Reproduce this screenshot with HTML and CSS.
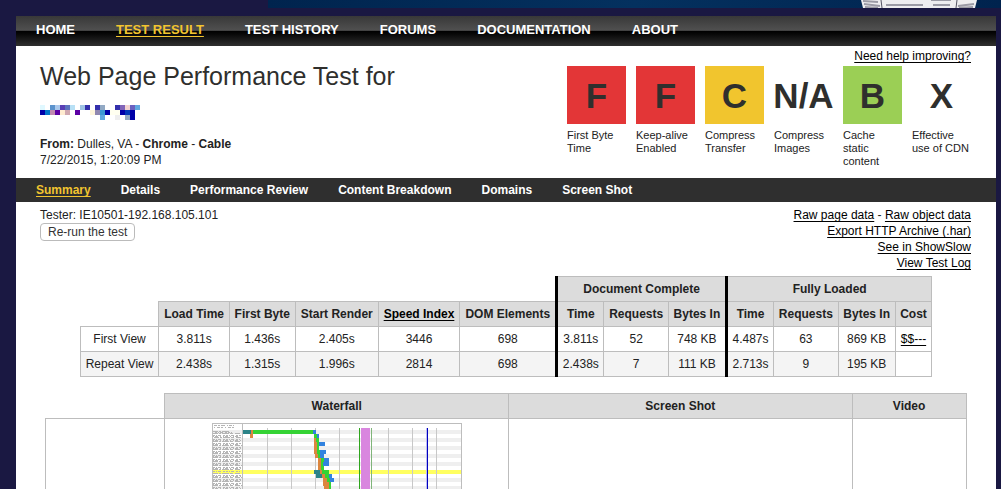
FILE: index.html
```html
<!DOCTYPE html>
<html lang="en">
<head>
<meta charset="utf-8">
<title>Web Page Performance Test</title>
<link rel="stylesheet" href="styles.css">
</head>
<body>
<div class="banner">
  <svg class="banner-art" width="120" height="8" viewBox="0 0 120 8" aria-hidden="true">
    <path d="M3 0 5 8H117L119 0Z" fill="#eeeef0"/>
    <path d="M6 4 22 6M7 7 20 8M5 1 20 2M100 6 116 4M101 8 115 7" stroke="#9b9ba5" stroke-width="2"/>
    <path d="M23 0 24 8M99 0 98 8" stroke="#555564"/>
    <path d="M28 5H65M73 0H93M75 5H92" stroke="#9b9ba5" stroke-width="2"/>
  </svg>
</div>
<div class="page">
  <nav class="main-nav" aria-label="Main">
    <a href="#home">HOME</a>
    <a class="active" href="#result">TEST RESULT</a>
    <a href="#history">TEST HISTORY</a>
    <a href="#forums">FORUMS</a>
    <a href="#docs">DOCUMENTATION</a>
    <a href="#about">ABOUT</a>
  </nav>
  <header class="header">
    <div class="summary">
      <h1>Web Page Performance Test for</h1>
      <svg class="tested-url" width="100" height="15" viewBox="0 0 20 3" shape-rendering="crispEdges" aria-hidden="true">
        <path fill="#e0f8ff" d="M0 0h1v1h-1z"/><path fill="#5b92cc" d="M2 0h1v1h-1z"/><path fill="#aac8ec" d="M3 0h1v1h-1z"/><path fill="#5a3fb5" d="M4 0h1v1h-1z"/><path fill="#5b72bf" d="M5 0h1v1h-1z"/><path fill="#b8e0f5" d="M6 0h1v1h-1z"/><path fill="#9fc4e4" d="M8 0h1v1h-1z"/><path fill="#3430ac" d="M9 0h1v1h-1zM11 0h1v1h-1zM15 0h1v1h-1z"/><path fill="#92a9c4" d="M12 0h1v1h-1zM17 2h1v1h-1z"/><path fill="#8064b8" d="M16 0h1v1h-1z"/><path fill="#f2d2d0" d="M17 0h1v1h-1z"/><path fill="#6a60c0" d="M18 0h1v1h-1z"/><path fill="#60a8e0" d="M19 0h1v1h-1zM12 2h1v1h-1z"/>
        <path fill="#0000a8" d="M0 1h1v1h-1zM13 1h1v1h-1zM16 1h1v1h-1zM18 1h1v2h-1z"/><path fill="#0074c8" d="M1 1h1v1h-1z"/><path fill="#c08ab0" d="M2 1h1v1h-1z"/><path fill="#5c00a4" d="M3 1h1v1h-1zM7 1h1v1h-1z"/><path fill="#ffecd0" d="M4 1h1v1h-1z"/><path fill="#d0a8b0" d="M5 1h1v1h-1z"/><path fill="#fff6dc" d="M10 1h1v1h-1z"/><path fill="#9088b0" d="M11 1h1v1h-1z"/><path fill="#3c98d4" d="M12 1h1v1h-1z"/><path fill="#fffff0" d="M14 1h2v1h-2z"/><path fill="#0038b8" d="M17 1h1v1h-1z"/><path fill="#eeeeee" d="M15 2h1v1h-1z"/>
      </svg>
      <p><b>From:</b> Dulles, VA - <b>Chrome</b> - <b>Cable</b><br>7/22/2015, 1:20:09 PM</p>
    </div>
    <div class="optimization">
      <a class="help" href="#improve">Need help improving?</a>
      <ul class="grades">
        <li><span class="grade bad">F</span>First Byte Time</li>
        <li><span class="grade bad">F</span>Keep-alive Enabled</li>
        <li><span class="grade fair">C</span>Compress Transfer</li>
        <li><span class="grade">N/A</span>Compress Images</li>
        <li><span class="grade good">B</span>Cache static content</li>
        <li><span class="grade">X</span>Effective use&nbsp;of&nbsp;CDN</li>
      </ul>
    </div>
  </header>
  <nav class="sub-nav" aria-label="Result">
    <a class="active" href="#summary">Summary</a>
    <a href="#details">Details</a>
    <a href="#review">Performance Review</a>
    <a href="#breakdown">Content Breakdown</a>
    <a href="#domains">Domains</a>
    <a href="#screens">Screen Shot</a>
  </nav>
  <div class="info">
    <div class="tester">
      <div>Tester: IE10501-192.168.105.101</div>
      <button type="button">Re-run the test</button>
    </div>
    <div class="exports">
      <div><a href="#page-data">Raw page data</a> - <a href="#object-data">Raw object data</a></div>
      <a href="#har">Export HTTP Archive (.har)</a>
      <a href="#showslow">See in ShowSlow</a>
      <a href="#log">View Test Log</a>
    </div>
  </div>
  <table class="results">
    <thead>
      <tr>
        <td class="blank" colspan="6"></td>
        <th class="group" colspan="3">Document Complete</th>
        <th class="group" colspan="4">Fully Loaded</th>
      </tr>
      <tr>
        <td class="blank"></td>
        <th>Load Time</th><th>First Byte</th><th>Start Render</th><th><a href="#speed-index">Speed Index</a></th><th>DOM Elements</th>
        <th class="group">Time</th><th>Requests</th><th>Bytes In</th>
        <th class="group">Time</th><th>Requests</th><th>Bytes In</th><th>Cost</th>
      </tr>
    </thead>
    <tbody>
      <tr>
        <td>First View</td><td>3.811s</td><td>1.436s</td><td>2.405s</td><td>3446</td><td>698</td>
        <td class="group">3.811s</td><td>52</td><td>748 KB</td>
        <td class="group">4.487s</td><td>63</td><td>869 KB</td><td><a href="#cost">$$---</a></td>
      </tr>
      <tr class="even">
        <td>Repeat View</td><td>2.438s</td><td>1.315s</td><td>1.996s</td><td>2814</td><td>698</td>
        <td class="group">2.438s</td><td>7</td><td>111 KB</td>
        <td class="group">2.713s</td><td>9</td><td>195 KB</td><td class="empty"></td>
      </tr>
    </tbody>
  </table>
  <table class="media">
    <colgroup><col class="col-label"><col><col><col class="col-video"></colgroup>
    <thead><tr><td class="blank"></td><th>Waterfall</th><th>Screen Shot</th><th>Video</th></tr></thead>
    <tbody>
      <tr>
        <td></td>
        <td>
          <svg class="waterfall" width="250" height="120" viewBox="0 0 250 120" shape-rendering="crispEdges" role="img" aria-label="Waterfall chart">
            <defs>
              <pattern id="stripes" width="250" height="8" y="7" patternUnits="userSpaceOnUse"><path fill="#efefef" d="M0 0h250v4H0z"/></pattern>
            </defs>
            <path fill="#fff" d="M0 0h250v120H0z"/>
            <path fill="url(#stripes)" d="M0 7h250v113H0z"/>
            <path fill="#ffff60" d="M0 47h250v4H0z"/>
            <g stroke="#b5b5b5" fill="none">
              <path stroke-dasharray="3 1 2 1 4 2 1 1" d="M2 2.5H22"/>
              <path stroke-dasharray="1 2 3 1 2 2" d="M2 4.500H22"/>
              <path stroke-dasharray="5 1 2 1 7 1 3 2" d="M1 8.500H18M1 10.500H28M2 14.500H30M1 18.500H29M1 22.500H30M1 26.500H28M1 30.500H30M1 34.500H28M1 38.500H29M1 42.500H30M1 46.500H29M1 50.500H28M1 54.500H30M1 58.500H28M1 62.500H30M1 66.500H29"/>
              <path stroke-dasharray="2 1 1 1 3 2 2 1" d="M3 9.500H20M1 12.500H30M1 16.500H28M1 20.500H30M1 24.500H29M1 28.500H30M1 32.500H29M1 36.500H30M1 40.500H28M1 44.500H30M1 48.500H28M1 52.500H30M1 56.500H29M1 60.500H30M1 64.500H28"/>
              <path stroke-dasharray="1 1 3 2 1 2" d="M1 13.500H28M1 17.500H30M1 21.500H28M1 25.500H29M1 29.500H28M1 33.500H29M1 37.500H30M1 41.500H28M1 45.500H30M1 53.500H29M1 57.500H30M1 61.500H28M1 65.500H30"/>
            </g>
            <path stroke="#c8c8c8" d="M55.500 5V120M79.500 5V120M103.500 5V120M127.500 5V120M176.500 5V120M200.500 5V120M224.500 5V120"/>
            <path stroke="#bdbdbd" d="M30.500 0V120"/>
            <path fill="#d986df" d="M149 5h9v115h-9z"/>
            <path stroke="#2fa51d" d="M147.500 5V120"/>
            <path stroke="#80b57a" d="M159.500 5V120"/>
            <path fill="#bcbcf2" d="M214 5h1v115h-1z"/>
            <path stroke="#0000c0" d="M215.500 5V120"/>
            <g stroke-width="4">
              <path stroke="#2b8387" d="M31 9H39M102 49H108M104 53H110"/>
              <path stroke="#dc863f" d="M39 9H41M38 13H41M102 17H104M102 21H105M102 25H105M102 29H105M103 33H106M106 37H109M106 41H109M106 45H109M108 49H110M110 53H113M111 57H115M111 61H117M112 65H117M113 69H118"/>
              <path stroke="#35d335" d="M41 9H101M102 13H105M104 17H107M105 21H107M105 25H107M105 29H108M106 33H108M109 37H112M109 41H111M109 45H112M110 49H117M113 53H117M115 57H118M117 61H119M117 65H119M118 69H120"/>
              <path stroke="#3182df" d="M101 9H104M105 13H107M107 21H113M108 29H114M108 33H112M112 37H117M111 41H117M117 53H120M118 57H122"/>
            </g>
            <rect x=".5" y=".5" width="249" height="119" fill="none" stroke="#bdbdbd"/>
          </svg>
        </td>
        <td></td>
        <td></td>
      </tr>
    </tbody>
  </table>
</div>
</body>
</html>
```
FILE: styles.css
```css
html { overflow: hidden; }
body {
  margin: 0;
  background: #1a1842;
  color: #222;
  font: 12px/16px "Liberation Sans", Arial, sans-serif;
}
a { color: #000; text-decoration: underline; text-underline-offset: 2px; }

.banner {
  display: flex;
  justify-content: flex-end;
  height: 8px;
  margin: 0 0 8px 268px;
  padding-right: 23px;
  background: linear-gradient(90deg, #00244e, #04315f 50%, #00234e);
}
.page { margin: 0 5px 0 16px; background: #fff; }

.main-nav, .sub-nav { display: flex; padding: 0 20px; }
.main-nav {
  gap: 41px;
  height: 30px;
  background: linear-gradient(#383838, #505050 48%, #000 50%, #080808 60%, #303030);
  font-size: 13px;
  font-weight: bold;
  line-height: 28px;
}
.main-nav a, .sub-nav a { color: #fff; text-decoration: none; }
.main-nav .active, .sub-nav .active { color: #f2c430; text-decoration: underline; }
.sub-nav {
  gap: 30px;
  height: 24px;
  background: #2f2f2f;
  font-weight: bold;
  line-height: 24px;
}

.header {
  display: flex;
  justify-content: space-between;
  min-height: 132px;
  padding: 0 25px 0 24px;
  box-sizing: border-box;
}
h1 {
  margin: 12px 0 11px;
  color: #2f2f2d;
  font-size: 25px;
  font-weight: normal;
  line-height: 36px;
}
.tested-url { display: block; }
.summary p { margin: 16px 0 0; }
.optimization { display: flex; flex-direction: column; align-items: flex-end; padding-top: 2px; }
.grades { display: flex; gap: 10px; margin: 2px 0 0; padding: 0; list-style: none; }
.grades li { width: 59px; font-size: 11px; line-height: 13px; }
.grade {
  display: flex;
  align-items: center;
  justify-content: center;
  height: 58px;
  margin-bottom: 5px;
  color: #2f2f2d;
  font-size: 35px;
  font-weight: bold;
}
.bad { background: #e33637; }
.fair { background: #f1c52e; }
.good { background: #9bcf55; }

.info { display: flex; justify-content: space-between; padding: 5px 25px 5px 24px; }
.tester button {
  display: block;
  height: 18px;
  padding: 0 7px;
  border: 1px solid #bbb;
  border-radius: 4px;
  background: #fff;
  color: #333;
  font: 12px/16px "Liberation Sans", Arial, sans-serif;
}
.exports { display: flex; flex-direction: column; align-items: flex-end; }

table { border-collapse: collapse; text-align: center; }
th, td { height: 24px; padding: 0 4px; border: 1px solid #bdbdbd; box-sizing: border-box; white-space: nowrap; }
th { background: #dcdcdc; }
.blank { border-top: 0; border-left: 0; }
.results { width: 87%; margin: 0 auto 16px; }
.results .blank { border: 0; }
.results th, .results td { height: 25px; }
.results .group { border-left: 3px solid #000; }
.even td { background: #f4f4f4; }
.even .empty { background: #fff; }

.media { width: 94%; margin: 0 auto; table-layout: fixed; }
.media th { height: 25px; }
.col-label { width: 119px; }
.col-video { width: 114px; }
.media tbody td { padding: 4px 0; }
.waterfall { display: block; margin: 0 auto; }
```
